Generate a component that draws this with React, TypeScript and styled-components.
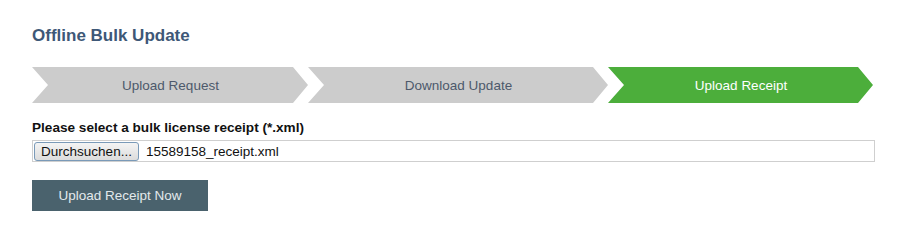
import React from 'react';
import styled, { createGlobalStyle } from 'styled-components';

/** Style */

const GlobalStyle = createGlobalStyle`
  body {
    margin: 0;
    background: #ffffff;
    font-family: "Liberation Sans", Arial, sans-serif;
  }
`;

const Page = styled.div`
  padding: 26px 0 0 32px;
  width: 843px;
`;

const Title = styled.h2`
  margin: 0;
  font-size: 17px;
  line-height: 20px;
  font-weight: bold;
  color: #3e5877;
`;

const Steps = styled.div`
  display: flex;
  margin-top: 21px;
  height: 36px;
`;

const Step = styled.div<{ $width: number; $active?: boolean }>`
  width: ${(p) => p.$width}px;
  flex: none;
  display: flex;
  align-items: center;
  justify-content: center;
  padding: 0 15px 0 16px;
  box-sizing: border-box;
  font-size: 13.5px;
  color: ${(p) => (p.$active ? '#ffffff' : '#4d596b')};
  background: ${(p) => (p.$active ? '#4cae3b' : '#cccccc')};
  clip-path: polygon(
    0 0,
    calc(100% - 15px) 0,
    100% 50%,
    calc(100% - 15px) 100%,
    0 100%,
    16px 50%
  );
`;

const Label = styled.div`
  margin-top: 17px;
  font-size: 13.6px;
  line-height: 16px;
  font-weight: bold;
  color: #111111;
`;

const FileField = styled.div`
  margin-top: 4px;
  height: 22px;
  width: 843px;
  box-sizing: border-box;
  border: 1px solid #cfcfcf;
  display: flex;
  align-items: center;
  padding-left: 1px;
  gap: 7px;
`;

const BrowseButton = styled.button`
  height: 19px;
  width: 105px;
  padding: 0;
  font-family: "Liberation Sans", Arial, sans-serif;
  font-size: 13.5px;
  color: #111111;
  border: 1px solid #7a9ab8;
  border-radius: 3px;
  background: linear-gradient(#f4f4f4, #dcdcdc);
  line-height: 15px;
`;

const FileName = styled.span`
  font-size: 13.5px;
  color: #111111;
`;

const SubmitButton = styled.button`
  margin-top: 18px;
  width: 176px;
  height: 31px;
  border: none;
  background: #4a626d;
  color: #e3e9ec;
  font-family: "Liberation Sans", Arial, sans-serif;
  font-size: 13.5px;
  padding: 0;
`;

/** End */

const steps = [
  { label: 'Upload Request', width: 276 },
  { label: 'Download Update', width: 300 },
  { label: 'Upload Receipt', width: 265, active: true },
];

export default function App() {
  return (
    <Page>
      <GlobalStyle />
      <Title>Offline Bulk Update</Title>
      <Steps>
        {steps.map((s) => (
          <Step key={s.label} $width={s.width} $active={s.active}>
            {s.label}
          </Step>
        ))}
      </Steps>
      <Label>Please select a bulk license receipt (*.xml)</Label>
      <FileField>
        <BrowseButton>Durchsuchen...</BrowseButton>
        <FileName>15589158_receipt.xml</FileName>
      </FileField>
      <SubmitButton>Upload Receipt Now</SubmitButton>
    </Page>
  );
}
